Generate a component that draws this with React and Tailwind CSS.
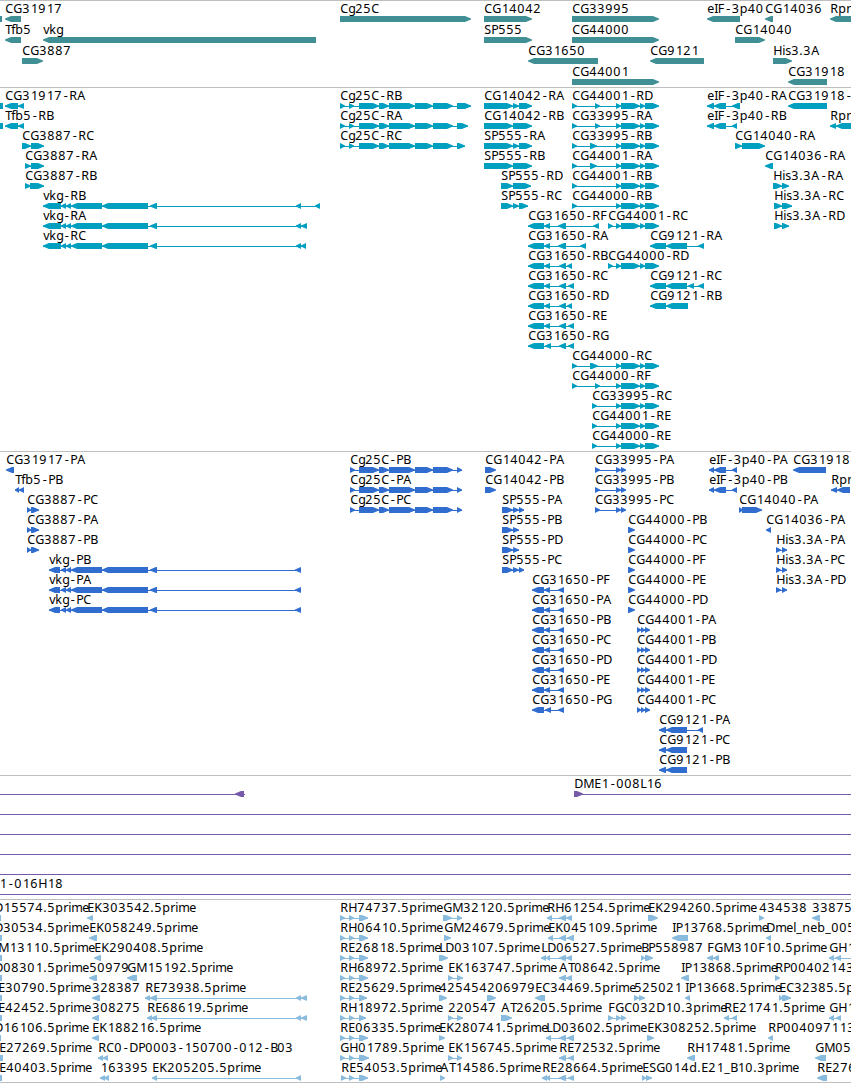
const BAR_HEIGHT = 6

// glyph advances in px for the track labels, digits are all 8
const ADVANCE = {
  A: 9, B: 7, C: 8, D: 9, E: 7, F: 7, G: 9, H: 9, I: 3.5, K: 8, L: 6, M: 11, P: 7, R: 8, S: 7, T: 6,
  b: 8, d: 8, e: 7, f: 4, g: 7, i: 3, k: 7, l: 3, m: 11, n: 8, p: 8, r: 5, s: 6, v: 6,
  '-': 7, '.': 4, _: 6,
}

// shared exon runs
const COL = [[359, 379], [379, 389], [389, 415], [415, 433], [433, 453]]
const VKG = [[61, 66], [66, 71], [71, 102], [102, 148], [150, 157]]
const CG44 = [[616, 621], [621, 640], [640, 645], [645, 659]]
const RH = [[340, 345], [349, 354], [359, 368]]

// each feature: [label, direction, exons, label x (defaults to the first exon), line end]
const geneRows = [
  [
    ['', '', [[0, 2]]],
    ['CG31917', '<', [[5, 21]]],
    ['Cg25C', '>', [[340, 471]]],
    ['CG14042', '>', [[484, 532]]],
    ['CG33995', '>', [[572, 659]]],
    ['eIF-3p40', '<', [[707, 740]]],
    ['CG14036', '<', [[765, 773]]],
    ['Rpn', '<', [[830, 860]]],
  ],
  [
    ['Tfb5', '<', [[5, 21]]],
    ['vkg', '<', [[43, 316]]],
    ['SP555', '>', [[484, 532]]],
    ['CG44000', '>', [[572, 659]]],
    ['CG14040', '>', [[735, 765]]],
  ],
  [
    ['CG3887', '>', [[22, 43]]],
    ['CG31650', '<', [[528, 598]]],
    ['CG9121', '<', [[650, 704]]],
    ['His3.3A', '>', [[773, 792]]],
  ],
  [
    ['CG44001', '>', [[572, 659]]],
    ['CG31918', '<', [[788, 827]]],
  ],
]

const transcriptRows = [
  [
    ['', '', [[0, 3]]],
    ['CG31917-RA', '<', [[5, 18], [18, 24]]],
    ['Cg25C-RB', '>', [[340, 345], [349, 354], ...COL, [457, 471]]],
    ['CG14042-RA', '>', [[484, 513], [513, 519], [519, 532]]],
    ['CG44001-RD', '>', [[572, 577], [595, 600], ...CG44]],
    ['eIF-3p40-RA', '<', [[707, 714], [714, 726], [732, 740]]],
    ['CG31918-RA', '<', [[788, 827]]],
  ],
  [
    ['', '', [[0, 3]]],
    ['Tfb5-RB', '<', [[5, 18], [18, 24]]],
    ['Cg25C-RA', '>', [[340, 345], [349, 354], ...COL, [457, 468]]],
    ['CG14042-RB', '>', [[484, 513], [513, 532]]],
    ['CG33995-RA', '>', [[572, 577], [595, 600], ...CG44]],
    ['eIF-3p40-RB', '<', [[707, 714], [714, 726], [732, 737]]],
    ['Rpn', '<', [[830, 836], [836, 860]]],
  ],
  [
    ['CG3887-RC', '>', [[22, 31], [31, 44]]],
    ['Cg25C-RC', '>', [[340, 345], [349, 354], ...COL, [457, 465]]],
    ['SP555-RA', '>', [[484, 513], [513, 519], [519, 532]]],
    ['CG33995-RB', '>', [[572, 577], [590, 597], ...CG44]],
    ['CG14040-RA', '>', [[735, 742], [742, 765]]],
  ],
  [
    ['CG3887-RA', '>', [[25, 31], [31, 44]]],
    ['SP555-RB', '>', [[484, 513], [513, 532]]],
    ['CG44001-RA', '>', [[572, 577], [590, 597], ...CG44]],
    ['CG14036-RA', '<', [[765, 773]]],
  ],
  [
    ['CG3887-RB', '>', [[25, 31], [30, 44]]],
    ['SP555-RD', '>', [[501, 513], [513, 531]]],
    ['CG44001-RB', '>', [[572, 577], ...CG44]],
    ['His3.3A-RA', '>', [[773, 782], [782, 789]]],
  ],
  [
    ['vkg-RB', '<', [[43, 61], ...VKG, [296, 301], [315, 320]]],
    ['SP555-RC', '>', [[501, 513], [513, 519], [519, 528]]],
    ['CG44000-RB', '>', [[572, 577], ...CG44]],
    ['His3.3A-RC', '>', [[774, 782], [782, 792]]],
  ],
  [
    ['vkg-RA', '<', [[43, 61], ...VKG, [296, 301], [301, 307]]],
    ['CG31650-RF', '<', [[528, 544], [544, 550], [558, 566], [593, 599]]],
    ['CG44001-RC', '>', [[608, 613], ...CG44]],
    ['His3.3A-RD', '>', [[774, 782], [782, 789]]],
  ],
  [
    ['vkg-RC', '<', [[43, 61], ...VKG, [296, 301], [301, 306]]],
    ['CG31650-RA', '<', [[528, 544], [544, 550], [558, 566], [580, 586]]],
    ['CG9121-RA', '<', [[650, 666], [666, 687], [698, 704]]],
  ],
  [
    ['CG31650-RB', '<', [[528, 544], [544, 550], [559, 566], [567, 572]]],
    ['CG44000-RD', '>', [[608, 613], ...CG44]],
  ],
  [
    ['CG31650-RC', '<', [[528, 544], [544, 550], [559, 566], [568, 574]]],
    ['CG9121-RC', '<', [[650, 666], [666, 687], [688, 694], [698, 704]]],
  ],
  [
    ['CG31650-RD', '<', [[528, 544], [544, 550], [559, 566], [567, 572]]],
    ['CG9121-RB', '<', [[650, 666], [666, 688]]],
  ],
  [['CG31650-RE', '<', [[528, 544], [544, 550], [559, 566], [568, 574]]]],
  [['CG31650-RG', '<', [[528, 544], [545, 551], [559, 566], [568, 574]]]],
  [['CG44000-RC', '>', [[572, 577], [590, 598], ...CG44]]],
  [['CG44000-RF', '>', [[572, 577], [595, 600], ...CG44]]],
  [['CG33995-RC', '>', [[592, 597], ...CG44]]],
  [['CG44001-RE', '>', [[592, 597], ...CG44]]],
  [['CG44000-RE', '>', [[592, 597], ...CG44]]],
]

const cg31650 = (label) => [label, '<', [[532, 544], [544, 550], [558, 564]]]
const cg33995 = (label) => [label, '>', [[595, 600], [616, 621], [621, 626]]]
const cg44001 = (label) => [label, '>', [[637, 641], [641, 645], [645, 650]]]
const colP = (label) => [label, '>', [[350, 355], ...COL, [457, 462]]]
const vkgP = (label) => [label, '<', [[49, 60], ...VKG, [295, 301]]]

const proteinRows = [
  [
    ['CG31917-PA', '<', [[6, 14]]],
    colP('Cg25C-PB'),
    ['CG14042-PA', '>', [[485, 496]]],
    cg33995('CG33995-PA'),
    ['eIF-3p40-PA', '<', [[709, 714], [714, 726], [732, 737]]],
    ['CG31918', '<', [[793, 826]]],
  ],
  [
    ['Tfb5-PB', '<', [[15, 19], [19, 24]]],
    colP('Cg25C-PA'),
    ['CG14042-PB', '>', [[485, 496]]],
    cg33995('CG33995-PB'),
    ['eIF-3p40-PB', '<', [[709, 714], [714, 726], [732, 737]]],
    ['Rpn', '<', [[831, 837], [837, 850]]],
  ],
  [
    ['CG3887-PC', '>', [[27, 31], [31, 39]]],
    colP('Cg25C-PC'),
    ['SP555-PA', '>', [[502, 513], [513, 519], [519, 524]]],
    cg33995('CG33995-PC'),
    ['CG14040-PA', '>', [[739, 743], [742, 762]]],
  ],
  [
    ['CG3887-PA', '>', [[27, 31], [31, 39]]],
    ['SP555-PB', '>', [[502, 513], [513, 519]]],
    ['CG44000-PB', '>', [[628, 635]]],
    ['CG14036-PA', '<', [[766, 771]]],
  ],
  [
    ['CG3887-PB', '>', [[27, 31], [31, 39]]],
    ['SP555-PD', '>', [[502, 513], [513, 519]]],
    ['CG44000-PC', '>', [[628, 635]]],
    ['His3.3A-PA', '>', [[776, 781], [782, 787]]],
  ],
  [
    vkgP('vkg-PB'),
    ['SP555-PC', '>', [[502, 513], [513, 519], [519, 524]]],
    ['CG44000-PF', '>', [[628, 635]]],
    ['His3.3A-PC', '>', [[776, 781], [782, 787]]],
  ],
  [
    vkgP('vkg-PA'),
    cg31650('CG31650-PF'),
    ['CG44000-PE', '>', [[628, 635]]],
    ['His3.3A-PD', '>', [[776, 781], [782, 787]]],
  ],
  [vkgP('vkg-PC'), cg31650('CG31650-PA'), ['CG44000-PD', '>', [[628, 635]]]],
  [cg31650('CG31650-PB'), cg44001('CG44001-PA')],
  [cg31650('CG31650-PC'), cg44001('CG44001-PB')],
  [cg31650('CG31650-PD'), cg44001('CG44001-PD')],
  [cg31650('CG31650-PE'), cg44001('CG44001-PE')],
  [['CG31650-PG', '<', [[532, 544], [545, 551], [558, 564]]], cg44001('CG44001-PC')],
  [['CG9121-PA', '<', [[659, 666], [666, 687], [698, 703]]]],
  [['CG9121-PC', '<', [[659, 666], [666, 687]]]],
  [['CG9121-PB', '<', [[659, 666], [666, 687]]]],
]

const bacRows = [
  [
    ['', '<', [[235, 244]], 0, [0, 245]],
    ['DME1-008L16', '>', [[574, 583]], 574, [574, 851]],
  ],
  [['', '', [], 0, [0, 851]]],
  [['', '', [], 0, [0, 851]]],
  [['', '', [], 0, [0, 851]]],
  [['', '', [], 0, [0, 851]]],
  [['1-016H18', '', [], -1, [0, 851]]],
]

const estRows = [
  [
    ['D15574.5prime', '', [[0, 1]], -6],
    ['EK303542.5prime', '<', [[87, 93]]],
    ['RH74737.5prime', '>', RH],
    ['GM32120.5prime', '>', [[443, 452], [457, 462]]],
    ['RH61254.5prime', '<', [[547, 552], [559, 566], [566, 572]]],
    ['EK294260.5prime', '>', [[648, 658]]],
    ['434538', '>', [[759, 764]]],
    ['33875', '<', [[812, 820]]],
  ],
  [
    ['D30534.5prime', '', [[0, 2]], -6],
    ['EK058249.5prime', '<', [[89, 97]]],
    ['RH06410.5prime', '>', RH],
    ['GM24679.5prime', '>', [[444, 451]]],
    ['EK045109.5prime', '<', [[548, 553], [559, 566], [567, 574]]],
    ['IP13768.5prime', '<', [[672, 688]]],
    ['Dmel_neb_005', '<', [[766, 771]]],
  ],
  [
    ['M13110.5prime', '', [[0, 2]], -2],
    ['EK290408.5prime', '<', [[94, 101]]],
    ['RE26818.5prime', '>', RH],
    ['LD03107.5prime', '>', [[439, 448]]],
    ['LD06527.5prime', '<', [[541, 546], [546, 550], [559, 566], [566, 572]]],
    ['BP558987', '>', [[641, 645], [645, 653]]],
    ['FGM310F10.5prime', '<', [[707, 713], [713, 719]]],
    ['GH1', '<', [[829, 834], [835, 841]], 829, [829, 851]],
  ],
  [
    ['D08301.5prime', '', [[0, 2]], -6],
    ['50979', '<', [[89, 97]]],
    ['GM15192.5prime', '<', [[127, 137]]],
    ['RH68972.5prime', '>', RH],
    ['EK163747.5prime', '>', [[448, 453], [457, 463]]],
    ['AT08642.5prime', '<', [[559, 566], [566, 572]]],
    ['IP13868.5prime', '<', [[681, 689]]],
    ['RP00402143', '>', [[775, 780]]],
  ],
  [
    ['E30790.5prime', '', [[0, 2]], -2],
    ['328387', '<', [[92, 100]]],
    ['RE73938.5prime', '<', [[145, 150], [150, 157], [296, 301], [301, 307]]],
    ['RE25629.5prime', '>', [[340, 345], [349, 354], [359, 367]]],
    ['425454', '>', [[439, 447]]],
    ['206979', '>', [[487, 496]]],
    ['EC34469.5prime', '<', [[535, 545]]],
    ['525021', '>', [[634, 639], [639, 645]]],
    ['IP13668.5prime', '<', [[685, 690]]],
    ['EC32385.5p', '>', [[779, 783], [782, 791]]],
  ],
  [
    ['E42452.5prime', '', [[0, 2]], -2],
    ['308275', '<', [[92, 99]]],
    ['RE68619.5prime', '<', [[147, 152], [151, 157], [296, 301], [301, 307]]],
    ['RH18972.5prime', '>', [[340, 345], [349, 354], [359, 366]]],
    ['220547', '>', [[448, 453], [457, 463]]],
    ['AT26205.5prime', '>', [[501, 512]]],
    ['FGC032D10.3prime', '>', [[608, 613], [616, 621], [621, 626]]],
    ['RE21741.5prime', '<', [[724, 729], [732, 737]]],
    ['GH1', '<', [[829, 834], [836, 841]]],
  ],
  [
    ['D16106.5prime', '', [[0, 1]], -6],
    ['EK188216.5prime', '<', [[92, 99]]],
    ['RE06335.5prime', '>', RH],
    ['EK280741.5prime', '>', [[439, 445]]],
    ['LD03602.5prime', '<', [[546, 551], [559, 566], [567, 574]]],
    ['EK308252.5prime', '>', [[647, 654]]],
    ['RP004097113', '<', [[768, 773]]],
  ],
  [
    ['E27269.5prime', '', [[0, 3]], -1],
    ['RC0-DP0003-150700-012-B03', '<', [[98, 103], [103, 108]]],
    ['GH01789.5prime', '>', [[340, 345], [349, 354], [359, 369]]],
    ['EK156745.5prime', '>', [[448, 453], [457, 462]]],
    ['RE72532.5prime', '<', [[559, 566], [568, 574]]],
    ['RH17481.5prime', '<', [[687, 695]]],
    ['GM05', '<', [[815, 826]]],
  ],
  [
    ['E40403.5prime', '', [[0, 2]], -1],
    ['163395', '<', [[100, 105], [104, 109]]],
    ['EK205205.5prime', '<', [[152, 157], [296, 301]]],
    ['RE54053.5prime', '>', [[341, 346], [349, 354], [359, 368]]],
    ['AT14586.5prime', '>', [[440, 445]]],
    ['RE28664.5prime', '<', [[542, 547], [546, 550], [559, 566], [568, 574]]],
    ['ESG014d.E21_B10.3prime', '>', [[642, 646], [646, 652]]],
    ['RE276', '<', [[817, 827]]],
  ],
]

const tracks = [
  { id: 'genes', rows: geneRows, pitch: 21, size: 'h-[87px]', color: 'fill-[#408f94]' },
  { id: 'transcripts', rows: transcriptRows, pitch: 20, size: 'h-[364px]', color: 'fill-[#009fc0]' },
  { id: 'proteins', rows: proteinRows, pitch: 20, size: 'h-[324px]', color: 'fill-[#306dce]' },
  { id: 'bacs', rows: bacRows, pitch: 20, size: 'h-[124px]', color: 'fill-[#7759aa]' },
  { id: 'ests', rows: estRows, pitch: 20, size: 'h-[184px] border-b', color: 'fill-[#88bbdd]' },
]

// small per-glyph nudges keep narrow glyphs centred in their cell
const NUDGE = { '-': 1.4, 1: 0.6 }

const glyphPositions = (label, x) => {
  let pos = x + 0.3
  return label.split('').map((ch) => {
    const start = pos + (NUDGE[ch] ?? 0)
    pos += ADVANCE[ch] ?? 8
    return start
  })
}

// blunt arrow head, drawn for '>' and mirrored for '<'
const exonPoints = (x1, x2, y, dir) => {
  const bottom = y + BAR_HEIGHT
  if (!dir) {
    return `${x1},${y} ${x2},${y} ${x2},${bottom} ${x1},${bottom}`
  }
  const head = Math.min(6, x2 - x1)
  const [tail, tip, s] = dir === '>' ? [x1, x2, -1] : [x2, x1, 1]
  return [
    [tail, y],
    [tip + s * head, y],
    [tip + s * head * 0.4, y + 1.5],
    [tip, y + 2.5],
    [tip, y + 3.5],
    [tip + s * head * 0.4, y + 4.5],
    [tip + s * head, bottom],
    [tail, bottom],
  ].map((p) => p.join(',')).join(' ')
}

const Feature = ({ feature, y }) => {
  const [label, dir, exons, labelX, range] = feature
  const [start, end] = range ?? [exons[0][0], exons[exons.length - 1][1]]
  const showLine = range || exons.length > 1

  return (
    <g>
      {showLine && <rect x={start} y={y + 18} width={end - start} height={1} />}
      {exons.map(([x1, x2]) => (
        <polygon key={x1} points={exonPoints(x1, x2, y + 15, dir)} />
      ))}
      {label && (
        <text x={glyphPositions(label, labelX ?? start).join(' ')} y={y + 12} className="fill-black">
          {label}
        </text>
      )}
    </g>
  )
}

const Track = ({ track }) => (
  <section className={`w-full border-[#bebebe] border-t overflow-hidden ${track.size}`}>
    <svg className={`block w-full h-full ${track.color}`}>
      {track.rows.map((row, i) => (
        <g key={i}>
          {row.map((feature, j) => (
            <Feature key={j} feature={feature} y={i * track.pitch} />
          ))}
        </g>
      ))}
    </svg>
  </section>
)

const App = () => {
  return (
    <main className="flex flex-col w-[851px] h-[1083px] overflow-hidden bg-white text-[12.5px] font-['Noto_Sans',sans-serif]">
      {tracks.map((track) => (
        <Track key={track.id} track={track} />
      ))}
    </main>
  )
}

export default App
